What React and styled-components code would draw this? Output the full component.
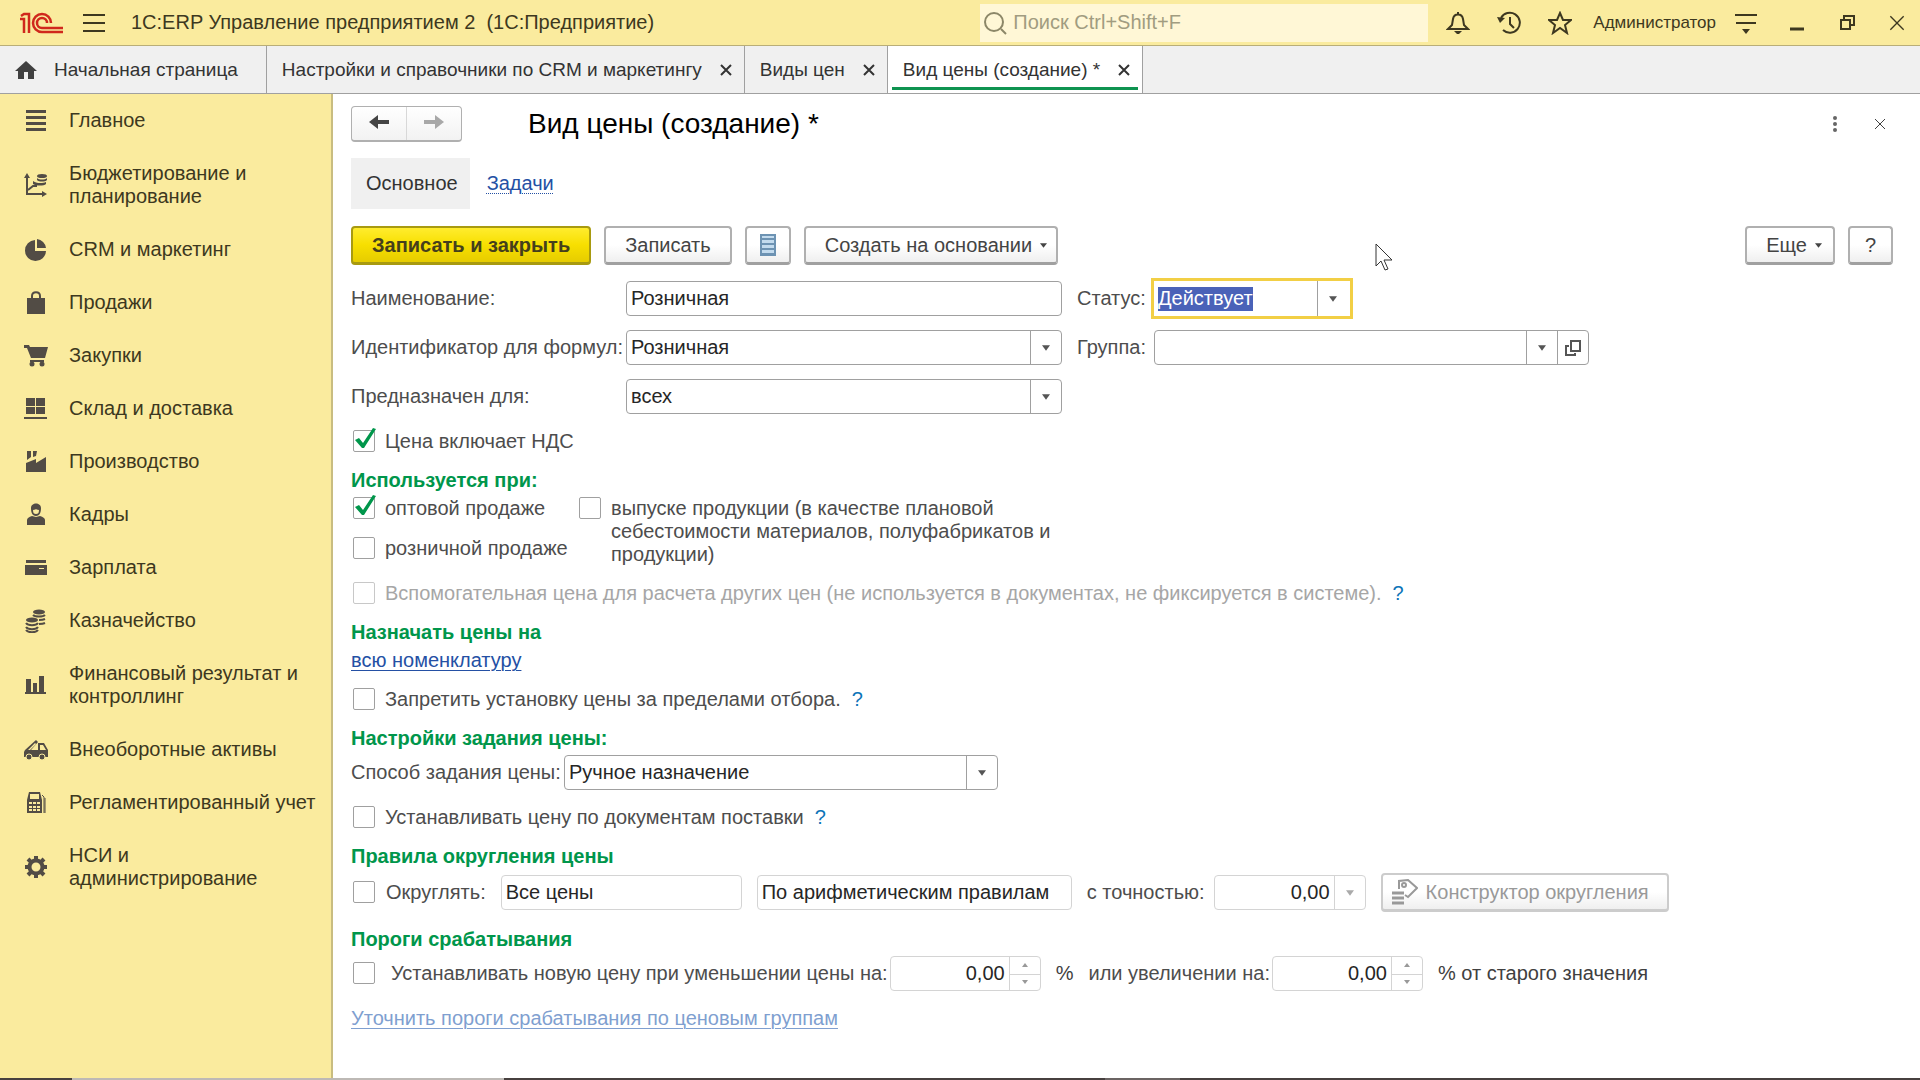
import { useState } from "react";
import styled, { createGlobalStyle, css } from "styled-components";

const GlobalStyle = createGlobalStyle`
  * {
    box-sizing: border-box;
  }
  body {
    margin: 0;
    background: #fff;
    color: #404040;
    font-family: "Liberation Sans", Arial, sans-serif;
    font-size: 20px;
    line-height: 23px;
  }
  button, input, select {
    font: inherit;
    color: inherit;
    margin: 0;
  }
`;

const Window = styled.div`
  display: flex;
  flex-direction: column;
  min-height: 100vh;
`;

// title bar
const TitleBar = styled.header`
  display: flex;
  align-items: center;
  height: 46px;
  padding-left: 20px;
  background: #faeb9e;
  border-bottom: 1px solid #b9ae78;
  color: #3d3820;
`;
const AppTitle = styled.div`
  flex: 1;
  margin-left: 6px;
  white-space: pre;
`;
const SearchBox = styled.label`
  display: flex;
  align-items: center;
  gap: 3px;
  width: 448px;
  height: 38px;
  padding-left: 4px;
  margin-right: 4px;
  background: #fff7d6;
  color: #8c8768;
`;
const SearchInput = styled.input`
  flex: 1;
  min-width: 0;
  border: 0;
  outline: 0;
  background: none;
  &::placeholder {
    color: #a19c80;
    opacity: 1;
  }
`;
const IconButton = styled.button`
  display: flex;
  align-items: center;
  justify-content: center;
  width: ${(p) => p.$width || 51}px;
  height: 36px;
  padding: 0;
  border: 0;
  background: none;
`;
const UserName = styled.a`
  margin: 0 4px 0 8px;
  color: inherit;
  font-size: 17px;
  text-decoration: none;
`;

// open windows
const TabBar = styled.nav`
  display: flex;
  height: 48px;
  background: #f0f0f0;
  border-bottom: 1px solid #a0a0a0;
  font-size: 19px;
`;
const Tab = styled.div`
  display: flex;
  align-items: center;
  gap: 12px;
  padding: 0 6px 0 15px;
  border-right: 1px solid #a0a0a0;
  color: #333;
  ${(p) =>
    p.$home &&
    css`
      gap: 17px;
      padding-right: 28px;
    `}
  ${(p) =>
    p.$active &&
    css`
      background: #fff;
      box-shadow: inset 4px 0 #fff, inset -4px 0 #fff, inset 0 -3px #fff,
        inset 0 -6px #0e9350;
    `}
`;
const TabLink = styled.a`
  color: inherit;
  text-decoration: none;
  white-space: nowrap;
`;

const Body = styled.div`
  display: flex;
  flex: 1;
`;

// sections panel
const Sidebar = styled.nav`
  flex: none;
  width: 333px;
  background: #faeb9e;
  border-right: 2px solid #c9bd80;
`;
const SectionLink = styled.a`
  display: flex;
  align-items: center;
  gap: 21px;
  padding: 15px 12px 15px 24px;
  color: #3d3820;
  text-decoration: none;
`;
const SectionIcon = styled.svg`
  flex: none;
  width: 24px;
  height: 24px;
  margin: -1px 0;
  fill: #524c45;
  stroke: #524c45;
  stroke-width: 0;
`;

// form
const Form = styled.form`
  display: flex;
  flex-direction: column;
  flex: 1;
  gap: 16px;
  min-width: 0;
  padding: 12px 27px 20px 18px;
`;
const FormHead = styled.div`
  display: flex;
  align-items: center;
  height: 36px;
`;
const History = styled.div`
  display: flex;
  width: 111px;
  height: 36px;
  border: 1px solid #b0b0b0;
  border-bottom-width: 2px;
  border-radius: 4px;
  background: linear-gradient(#fff, #f2f2f2);
`;
const HistoryButton = styled.button`
  flex: 1;
  padding: 0;
  border: 0;
  background: none;
  color: ${(p) => (p.disabled ? "#a8a8a8" : "#444")};
  & + & {
    border-left: 1px solid #d8d8d8;
  }
`;
const Title = styled.h1`
  flex: 1;
  margin: 0 0 0 66px;
  color: #000;
  font-size: 28px;
  font-weight: 400;
  line-height: 32px;
`;
const Pages = styled.div`
  display: flex;
  align-items: center;
  gap: 17px;
`;
const CurrentPage = styled.span`
  padding: 14px 12px 14px 15px;
  background: #f0f0f0;
  color: #333;
`;
const PageLink = styled.a`
  color: #2450a4;
  text-decoration: underline dotted 1px;
  text-underline-offset: 3px;
`;
const Toolbar = styled.div`
  display: flex;
  gap: 13px;
  padding-top: 1px;
`;
const Spacer = styled.div`
  flex: 1;
`;
const Button = styled.button`
  display: flex;
  align-items: center;
  justify-content: center;
  gap: 8px;
  height: 39px;
  padding: 0 ${(p) => p.$right || p.$pad || 19}px 0 ${(p) => p.$pad || 19}px;
  border: 2px solid #b0b0b0;
  border-bottom: 3px solid #a0a0a0;
  border-radius: 4px;
  background: linear-gradient(#fff 50%, #efefef);
  color: #444;
  white-space: nowrap;
  ${(p) =>
    p.$primary &&
    css`
      border-color: #a89a10;
      background: linear-gradient(#ffec2e, #f7df00 50%, #e6cc00);
      color: #453f1c;
      font-weight: 700;
    `}
  &:disabled {
    border-color: #ccc;
    color: #999;
  }
`;

const FieldGrid = styled.div`
  display: grid;
  grid-template-columns: 711px 1fr;
  gap: 14px 15px;
`;
const Row = styled.div`
  display: flex;
  align-items: center;
  gap: ${(p) => p.$gap || 0}px;
`;
const Label = styled.label`
  flex: none;
  width: ${(p) => (p.$width ? `${p.$width}px` : "auto")};
  color: #4d4d4d;
  white-space: nowrap;
`;
const Box = styled.div`
  display: flex;
  flex: ${(p) => (p.$width ? "none" : 1)};
  width: ${(p) => (p.$width ? `${p.$width}px` : "auto")};
  height: 35px;
  border: 1px solid ${(p) => (p.$muted ? "#d4d4d4" : "#a0a0a0")};
  border-radius: 4px;
  background: #fff;
  color: ${(p) => (p.$muted ? "#aaa" : "#555")};
  ${(p) =>
    p.$focused &&
    css`
      height: 41px;
      margin: -3px 0 -3px -3px;
      padding: 0 2px;
      border: 3px solid #f2cf45;
      border-radius: 0;
    `}
`;
const TextInput = styled.input`
  flex: 1;
  width: 100%;
  min-width: 0;
  padding: 0 4px;
  border: 0;
  outline: 0;
  background: none;
  color: #262626;
  text-align: ${(p) => (p.$right ? "right" : "left")};
  -webkit-text-fill-color: #262626;
`;
// the arrow lies over the right end of the list
const SelectShell = styled.div`
  display: grid;
  flex: 1;
  grid-template-columns: 1fr 31px;
  min-width: 0;
`;
const NativeSelect = styled.select`
  grid-area: 1 / 1 / 2 / 3;
  min-width: 0;
  padding: 0 4px;
  border: 0;
  outline: 0;
  appearance: none;
  background: none;
  color: #262626;
  ${(p) =>
    p.$selected &&
    css`
      padding: 0 2px;
      background: linear-gradient(#4a62b8, #4a62b8) 2px 50% / 95px 24px
        no-repeat;
      color: #fff;
    `}
`;
const SelectArrow = styled.span`
  grid-area: 1 / 2;
  display: flex;
  align-items: center;
  justify-content: center;
  border-left: 1px solid #a0a0a0;
  pointer-events: none;
`;
const BoxButton = styled.button`
  display: flex;
  flex: none;
  align-items: center;
  justify-content: center;
  width: 31px;
  padding: 0;
  border: 0;
  border-left: 1px solid ${(p) => (p.disabled ? "#d4d4d4" : "#a0a0a0")};
  background: none;
  color: ${(p) => (p.disabled ? "#aaa" : "#555")};
`;
const Spinner = styled.div`
  display: grid;
  flex: none;
  grid-template-rows: 1fr 1fr;
  width: 31px;
  border-left: 1px solid #d4d4d4;
`;
const SpinButton = styled.button`
  display: flex;
  align-items: center;
  justify-content: center;
  padding: 0;
  border: 0;
  background: none;
  color: #999;
  & + & {
    border-top: 1px solid #d4d4d4;
  }
`;

const Section = styled.section`
  display: flex;
  flex-direction: column;
  gap: 5px;
`;
const Heading = styled.h2`
  margin: 0;
  color: #00964b;
  font-size: 20px;
  font-weight: 700;
  line-height: 23px;
`;
const CheckLabel = styled.label`
  display: flex;
  align-items: flex-start;
  gap: ${(p) => p.$gap || 10}px;
  margin-left: 2px;
  color: ${(p) => (p.$disabled ? "#a6a6a6" : "#4d4d4d")};
`;
const CheckCell = styled.span`
  display: grid;
  flex: none;
`;
const CheckInput = styled.input`
  grid-area: 1 / 1;
  width: 22px;
  height: 22px;
  border: 1px solid ${(p) => (p.disabled ? "#c8c8c8" : "#a0a0a0")};
  border-radius: 2px;
  appearance: none;
  background: #fff;
`;
const Tick = styled.svg`
  grid-area: 1 / 1;
  width: 22px;
  height: 22px;
  overflow: visible;
  fill: #00964b;
  pointer-events: none;
`;
const UsageGrid = styled.div`
  display: grid;
  grid-template-columns: 218px 480px;
  gap: 8px;
`;
const UsageColumn = styled.div`
  display: flex;
  flex-direction: column;
  gap: 17px;
  white-space: nowrap;
`;
const Hint = styled.button`
  padding: 0;
  border: 0;
  background: none;
  color: #0d74b8;
`;
const FormLink = styled.a`
  align-self: flex-start;
  color: ${(p) => (p.$muted ? "#7f9fd0" : "#2450a4")};
  text-decoration: underline 1px;
  text-underline-offset: 3px;
`;

const Pointer = styled.svg`
  position: absolute;
  top: 243px;
  left: 1375px;
  width: 19px;
  height: 28px;
  pointer-events: none;
`;
const BottomEdge = styled.div`
  height: 2px;
  background: linear-gradient(
    90deg,
    #47403f 72px,
    #bdb9b5 72px 504px,
    #47403f 504px 1105px,
    #6b6463 1105px 1180px,
    #47403f 1180px
  );
`;

const sections = [
  {
    name: "Главное",
    icon: <path d="M2 1h20v3H2zM2 7h20v3H2zM2 13h20v3H2zM2 19h20v3H2z" />,
  },
  {
    name: "Бюджетирование и планирование",
    icon: (
      <>
        <path d="M3 3v18h17M4 17l5-4h4" fill="none" strokeWidth="2" />
        <path d="M0 5l3-5 3 5zM18 18l5 3-5 3z" />
        <ellipse cx="18" cy="3" rx="5" ry="2" />
        <path d="M13 5c2 2 8 2 10 0v2c-2 2-8 2-10 0zM9 8c2 2 9 3 13 1v2c-2 2-10 2-13 0z" />
      </>
    ),
  },
  {
    name: "CRM и маркетинг",
    icon: (
      <path d="M11 2v11h11A10.5 10.5 0 1 1 11 2zM13 1a10 10 0 0 1 9 9h-9z" />
    ),
  },
  {
    name: "Продажи",
    icon: (
      <>
        <path d="M3 7h18v16H3z" />
        <path d="M8 10V5c0-5 8-5 8 0v5" fill="none" strokeWidth="2" />
      </>
    ),
  },
  {
    name: "Закупки",
    icon: (
      <>
        <path d="M0 1h5l1 2h18l-3 11H7L3 4H0zM6 16h14v2H6z" />
        <circle cx="8" cy="20" r="2.5" />
        <circle cx="18" cy="20" r="2.5" />
      </>
    ),
  },
  {
    name: "Склад и доставка",
    icon: <path d="M2 1h9v8H2zM12 1h9v8h-9zM2 10h9v7H2zM12 10h9v7h-9zM0 20h23v2H0z" />,
  },
  {
    name: "Производство",
    icon: <path d="M2 22V13l10-4v4l10-6v15zM3 1h4v6l-4 3zM9 1h4l-1 5-3 1z" />,
  },
  {
    name: "Кадры",
    icon: (
      <>
        <path d="M7 5c0-6 10-6 10 0 0 4-1 8-5 8s-5-4-5-8zm2 2c0 3 1 4 3 4s3-1 3-4c-2 0-3-1-3-1s-1 1-3 1z" fillRule="evenodd" />
        <path d="M3 22v-5c0-2 2-3 5-4l4 1 4-1c3 1 5 2 5 4v5z" />
      </>
    ),
  },
  {
    name: "Зарплата",
    icon: <path d="M2 4h20v3H2zM1 9h22v10H1zM15 12v1h5v-1z" fillRule="evenodd" />,
  },
  {
    name: "Казначейство",
    icon: (
      <>
        <ellipse cx="15" cy="3" rx="6" ry="2.5" />
        <ellipse cx="8" cy="11" rx="6" ry="2.5" />
        <path
          d="M9 6c2 2 10 2 12 0M15 11c2 0 4 0 6-1M15 15c2 0 4 0 6-1M2 14c2 3 10 3 12 0M2 18c2 3 10 3 12 0M2 21c2 3 10 3 12 0"
          fill="none"
          strokeWidth="2"
        />
      </>
    ),
  },
  {
    name: "Финансовый результат и контроллинг",
    icon: <path d="M2 6h5v13H2zM9 10h4v9H9zM15 3h5v16h-5zM1 19h21v2H1z" />,
  },
  {
    name: "Внеоборотные активы",
    icon: (
      <>
        <path d="M1 12L12 2l2 2-7 8h7V5h6l4 7v7H0v-5zM16 7v5h6l-3-5zM4 12l7-7 1 1-6 6z" fillRule="evenodd" />
        <circle cx="5" cy="19" r="3" stroke="#faeb9e" strokeWidth="1" />
        <circle cx="18" cy="19" r="3" stroke="#faeb9e" strokeWidth="1" />
      </>
    ),
  },
  {
    name: "Регламентированный учет",
    icon: (
      <>
        <path d="M3 9l2-8h11l2 8v13H3zM6 3v5h9V3zM5 11v2h3v-2zm4 0v2h3v-2zm4 0v2h3v-2zm-8 4v2h3v-2zm4 0v2h3v-2zm4 0v2h3v-2zm-8 3v2h3v-2zm4 0v2h3v-2zm4 0v2h3v-2z" fillRule="evenodd" />
        <path d="M18 4l2 2v16M21 7v15" fill="none" strokeWidth="1" />
      </>
    ),
  },
  {
    name: "НСИ и администрирование",
    icon: (
      <>
        <circle cx="12" cy="12" r="6.5" fill="none" strokeWidth="4" />
        <path
          d="M12 1v4M12 19v4M1 12h4M19 12h4M4 4l3 3M17 17l3 3M4 20l3-3M17 7l3-3"
          strokeWidth="4"
        />
      </>
    ),
  },
];

function Line({ width = 24, height = 24, children, weight = 2 }) {
  return (
    <svg
      width={width}
      height={height}
      viewBox={`0 0 ${width} ${height}`}
      fill="none"
      stroke="currentColor"
      strokeWidth={weight}
    >
      {children}
    </svg>
  );
}

function Arrow({ up, size = 8 }) {
  return (
    <svg width={size} height={size - 2} viewBox="0 0 9 6" fill="currentColor">
      <path d={up ? "M0 6L4.5 0 9 6z" : "M0 0h9L4.5 6z"} />
    </svg>
  );
}

function Cross({ size = 12, weight = 2 }) {
  return (
    <svg width={size} height={size} viewBox="0 0 12 12" stroke="currentColor" strokeWidth={weight}>
      <path d="M1 1l10 10M11 1L1 11" />
    </svg>
  );
}

function Logo() {
  return (
    <svg width="43" height="22" viewBox="0 0 43 22" fill="none" stroke="#d0281c" strokeWidth="2.5">
      <path d="M0 7h4v14" />
      <path d="M1 4l3-2h5v19" />
      <path d="M31 11a9 9 0 1 0-9 9h21" />
      <path d="M27 11a5 5 0 1 0-5 5h21" />
    </svg>
  );
}

function Check({ children, gap, disabled, initial = false }) {
  const [checked, setChecked] = useState(initial);
  return (
    <CheckLabel $gap={gap} $disabled={disabled}>
      <CheckCell>
        <CheckInput
          type="checkbox"
          checked={checked}
          disabled={disabled}
          onChange={(e) => setChecked(e.target.checked)}
        />
        {checked && (
          <Tick viewBox="0 0 22 22">
            <path d="M2 10l4-2 4 5L20-2l3 1L11 18H9z" />
          </Tick>
        )}
      </CheckCell>
      <span>{children}</span>
    </CheckLabel>
  );
}

function Select({ id, value, width, focused, children }) {
  return (
    <Box $width={width} $focused={focused}>
      <SelectShell>
        <NativeSelect id={id} defaultValue={value} $selected={focused}>
          <option>{value}</option>
        </NativeSelect>
        <SelectArrow>
          <Arrow />
        </SelectArrow>
      </SelectShell>
      {children}
    </Box>
  );
}

function NumberBox({ id, label }) {
  return (
    <Box $width={151} $muted>
      <TextInput id={id} aria-label={label} defaultValue="0,00" disabled $right />
      <Spinner>
        <SpinButton type="button" aria-label="Увеличить" disabled>
          <Arrow up size={6} />
        </SpinButton>
        <SpinButton type="button" aria-label="Уменьшить" disabled>
          <Arrow size={6} />
        </SpinButton>
      </Spinner>
    </Box>
  );
}

function Header() {
  return (
    <TitleBar>
      <Logo />
      <IconButton $width={62} aria-label="Меню">
        <Line width={22} height={18}>
          <path d="M0 1h22M0 9h22M0 17h22" />
        </Line>
      </IconButton>
      <AppTitle>1C:ERP Управление предприятием 2  (1С:Предприятие)</AppTitle>
      <SearchBox>
        <Line>
          <circle cx="10" cy="11" r="9" />
          <path d="M17 18l5 5" />
        </Line>
        <SearchInput type="text" placeholder="Поиск Ctrl+Shift+F" />
      </SearchBox>
      <IconButton aria-label="Уведомления">
        <Line>
          <path d="M2 18h20l-4-4-1-6c-1-6-9-6-10 0l-1 6zM12 3V1" />
          <path d="M8 20h8l-3 3h-2z" fill="currentColor" stroke="none" />
        </Line>
      </IconButton>
      <IconButton aria-label="История">
        <Line>
          <path d="M4 7a10 10 0 1 1 2 12M13 6v7l4 4" />
          <path d="M0 6l8 1-5 5z" fill="currentColor" stroke="none" />
        </Line>
      </IconButton>
      <IconButton aria-label="Избранное">
        <Line>
          <path d="M12 2l3 7h8l-6 5 2 8-7-5-7 5 2-8-6-5h8z" />
        </Line>
      </IconButton>
      <UserName href="#user">Администратор</UserName>
      <IconButton aria-label="Настройки">
        <Line width={22}>
          <path d="M0 4h22M1 12h20" />
          <path d="M7 18h8l-4 5z" fill="currentColor" stroke="none" />
        </Line>
      </IconButton>
      <IconButton aria-label="Свернуть">
        <Line width={14} height={16} weight={3}>
          <path d="M0 14h14" />
        </Line>
      </IconButton>
      <IconButton aria-label="Восстановить">
        <Line width={15} height={15}>
          <path d="M1 5h9v9H1zM4 5V1h10v9h-4" />
        </Line>
      </IconButton>
      <IconButton $width={47} aria-label="Закрыть">
        <Cross size={16} weight={1} />
      </IconButton>
    </TitleBar>
  );
}

function Tabs() {
  const tabs = ["Настройки и справочники по CRM и маркетингу", "Виды цен", "Вид цены (создание) *"];
  return (
    <TabBar>
      <Tab $home>
        <svg width="22" height="18" viewBox="0 0 22 18" fill="#404040">
          <path d="M11 0l11 10h-3v8h-6v-7H9v7H3v-8H0z" />
        </svg>
        <TabLink href="#home">Начальная страница</TabLink>
      </Tab>
      {tabs.map((tab, index) => (
        <Tab key={tab} $active={index === 2}>
          <TabLink href={`#tab${index}`}>{tab}</TabLink>
          <IconButton $width={24} aria-label="Закрыть вкладку">
            <Cross />
          </IconButton>
        </Tab>
      ))}
    </TabBar>
  );
}

function PriceForm() {
  return (
    <Form onSubmit={(e) => e.preventDefault()}>
      <FormHead>
        <History>
          <HistoryButton type="button" aria-label="Назад">
            <Line width={22} height={16} weight={4}>
              <path d="M6 8h15" />
              <path d="M1 8l9-7v14z" fill="currentColor" stroke="none" />
            </Line>
          </HistoryButton>
          <HistoryButton type="button" aria-label="Вперед" disabled>
            <Line width={22} height={16} weight={4}>
              <path d="M1 8h15" />
              <path d="M21 8l-9-7v14z" fill="currentColor" stroke="none" />
            </Line>
          </HistoryButton>
        </History>
        <Title>Вид цены (создание) *</Title>
        <IconButton type="button" $width={64} aria-label="Еще действия">
          <svg width="6" height="18" fill="#666">
            <circle cx="3" cy="3" r="2" />
            <circle cx="3" cy="9" r="2" />
            <circle cx="3" cy="15" r="2" />
          </svg>
        </IconButton>
        <IconButton type="button" $width={26} aria-label="Закрыть форму">
          <Cross weight={1} />
        </IconButton>
      </FormHead>

      <Pages>
        <CurrentPage>Основное</CurrentPage>
        <PageLink href="#tasks">Задачи</PageLink>
      </Pages>

      <Toolbar>
        <Button $primary>Записать и закрыть</Button>
        <Button type="button">Записать</Button>
        <Button type="button" $pad={13} aria-label="Список">
          <svg width="16" height="22" viewBox="0 0 16 22">
            <path d="M0 0h16v22H0z" fill="#6d93b3" />
            <path d="M2 2h12v2H2zM2 6h12v3H2zM2 11h12v3H2zM2 16h12v3H2z" fill="#c3dbee" />
          </svg>
        </Button>
        <Button type="button" $right={9}>
          Создать на основании
          <Arrow size={7} />
        </Button>
        <Spacer />
        <Button type="button" $right={11}>
          Еще
          <Arrow size={7} />
        </Button>
        <Button type="button" $pad={15}>
          ?
        </Button>
      </Toolbar>

      <FieldGrid>
        <Row>
          <Label $width={275} htmlFor="name">Наименование:</Label>
          <Box>
            <TextInput id="name" defaultValue="Розничная" />
          </Box>
        </Row>
        <Row>
          <Label $width={77} htmlFor="status">Статус:</Label>
          <Select id="status" value="Действует" width={202} focused />
        </Row>
        <Row>
          <Label $width={275} htmlFor="ident">Идентификатор для формул:</Label>
          <Select id="ident" value="Розничная" />
        </Row>
        <Row>
          <Label $width={77} htmlFor="group">Группа:</Label>
          <Select id="group" value="" width={435}>
            <BoxButton type="button" aria-label="Открыть">
              <Line width={16} height={16}>
                <path d="M6 1h9v10H6zM4 6H1v9h9v-2" />
              </Line>
            </BoxButton>
          </Select>
        </Row>
        <Row>
          <Label $width={275} htmlFor="target">Предназначен для:</Label>
          <Select id="target" value="всех" />
        </Row>
      </FieldGrid>

      <Check initial>Цена включает НДС</Check>

      <Section>
        <Heading>Используется при:</Heading>
        <UsageGrid>
          <UsageColumn>
            <Check initial>оптовой продаже</Check>
            <Check>розничной продаже</Check>
          </UsageColumn>
          <Check>
            выпуске продукции (в качестве плановой себестоимости материалов, полуфабрикатов и
            продукции)
          </Check>
        </UsageGrid>
      </Section>

      <Row $gap={11}>
        <Check disabled>
          Вспомогательная цена для расчета других цен (не используется в документах, не фиксируется в
          системе).
        </Check>
        <Hint type="button">?</Hint>
      </Row>

      <Section>
        <Heading>Назначать цены на</Heading>
        <FormLink href="#items">всю номенклатуру</FormLink>
      </Section>

      <Row $gap={11}>
        <Check>Запретить установку цены за пределами отбора.</Check>
        <Hint type="button">?</Hint>
      </Row>

      <Section>
        <Heading>Настройки задания цены:</Heading>
        <Row>
          <Label $width={213} htmlFor="method">Способ задания цены:</Label>
          <Select id="method" value="Ручное назначение" width={434} />
        </Row>
      </Section>

      <Row $gap={11}>
        <Check>Устанавливать цену по документам поставки</Check>
        <Hint type="button">?</Hint>
      </Row>

      <Section>
        <Heading>Правила округления цены</Heading>
        <Row $gap={15}>
          <Check gap={11}>Округлять:</Check>
          <Box $width={241} $muted>
            <TextInput aria-label="Какие цены" defaultValue="Все цены" disabled />
          </Box>
          <Box $width={315} $muted>
            <TextInput aria-label="Правило" defaultValue="По арифметическим правилам" disabled />
          </Box>
          <Row $gap={9}>
            <Label htmlFor="precision">с точностью:</Label>
            <Box $width={152} $muted>
              <TextInput id="precision" defaultValue="0,00" disabled $right />
              <BoxButton type="button" aria-label="Выбрать точность" disabled>
                <Arrow />
              </BoxButton>
            </Box>
          </Row>
          <Button type="button" disabled $pad={9} $right={18}>
            <Line width={26} height={26}>
              <path d="M7 10V2l9-1 9 8-9 9-3-2" />
              <circle cx="12" cy="6" r="2" />
              <path d="M0 14h12M0 19h12M0 24h12" strokeWidth="3" />
            </Line>
            Конструктор округления
          </Button>
        </Row>
      </Section>

      <Section>
        <Heading>Пороги срабатывания</Heading>
        <Row $gap={15}>
          <Row $gap={2}>
            <Check gap={16}>Устанавливать новую цену при уменьшении цены на:</Check>
            <NumberBox label="Процент уменьшения" />
          </Row>
          <span>%</span>
          <Row $gap={2}>
            <Label htmlFor="growth">или увеличении на:</Label>
            <NumberBox id="growth" />
          </Row>
          <span>% от старого значения</span>
        </Row>
      </Section>

      <FormLink href="#limits" $muted>
        Уточнить пороги срабатывания по ценовым группам
      </FormLink>
    </Form>
  );
}

export default function App() {
  return (
    <Window>
      <GlobalStyle />
      <Header />
      <Tabs />
      <Body>
        <Sidebar>
          {sections.map((section) => (
            <SectionLink href="#section" key={section.name}>
              <SectionIcon viewBox="0 0 24 24">{section.icon}</SectionIcon>
              <span>{section.name}</span>
            </SectionLink>
          ))}
        </Sidebar>
        <PriceForm />
      </Body>
      <BottomEdge />
      <Pointer viewBox="0 0 19 28" fill="#fff" stroke="#333">
        <path d="M1 1v22l5-5 4 9 3-1-4-9h8z" />
      </Pointer>
    </Window>
  );
}
